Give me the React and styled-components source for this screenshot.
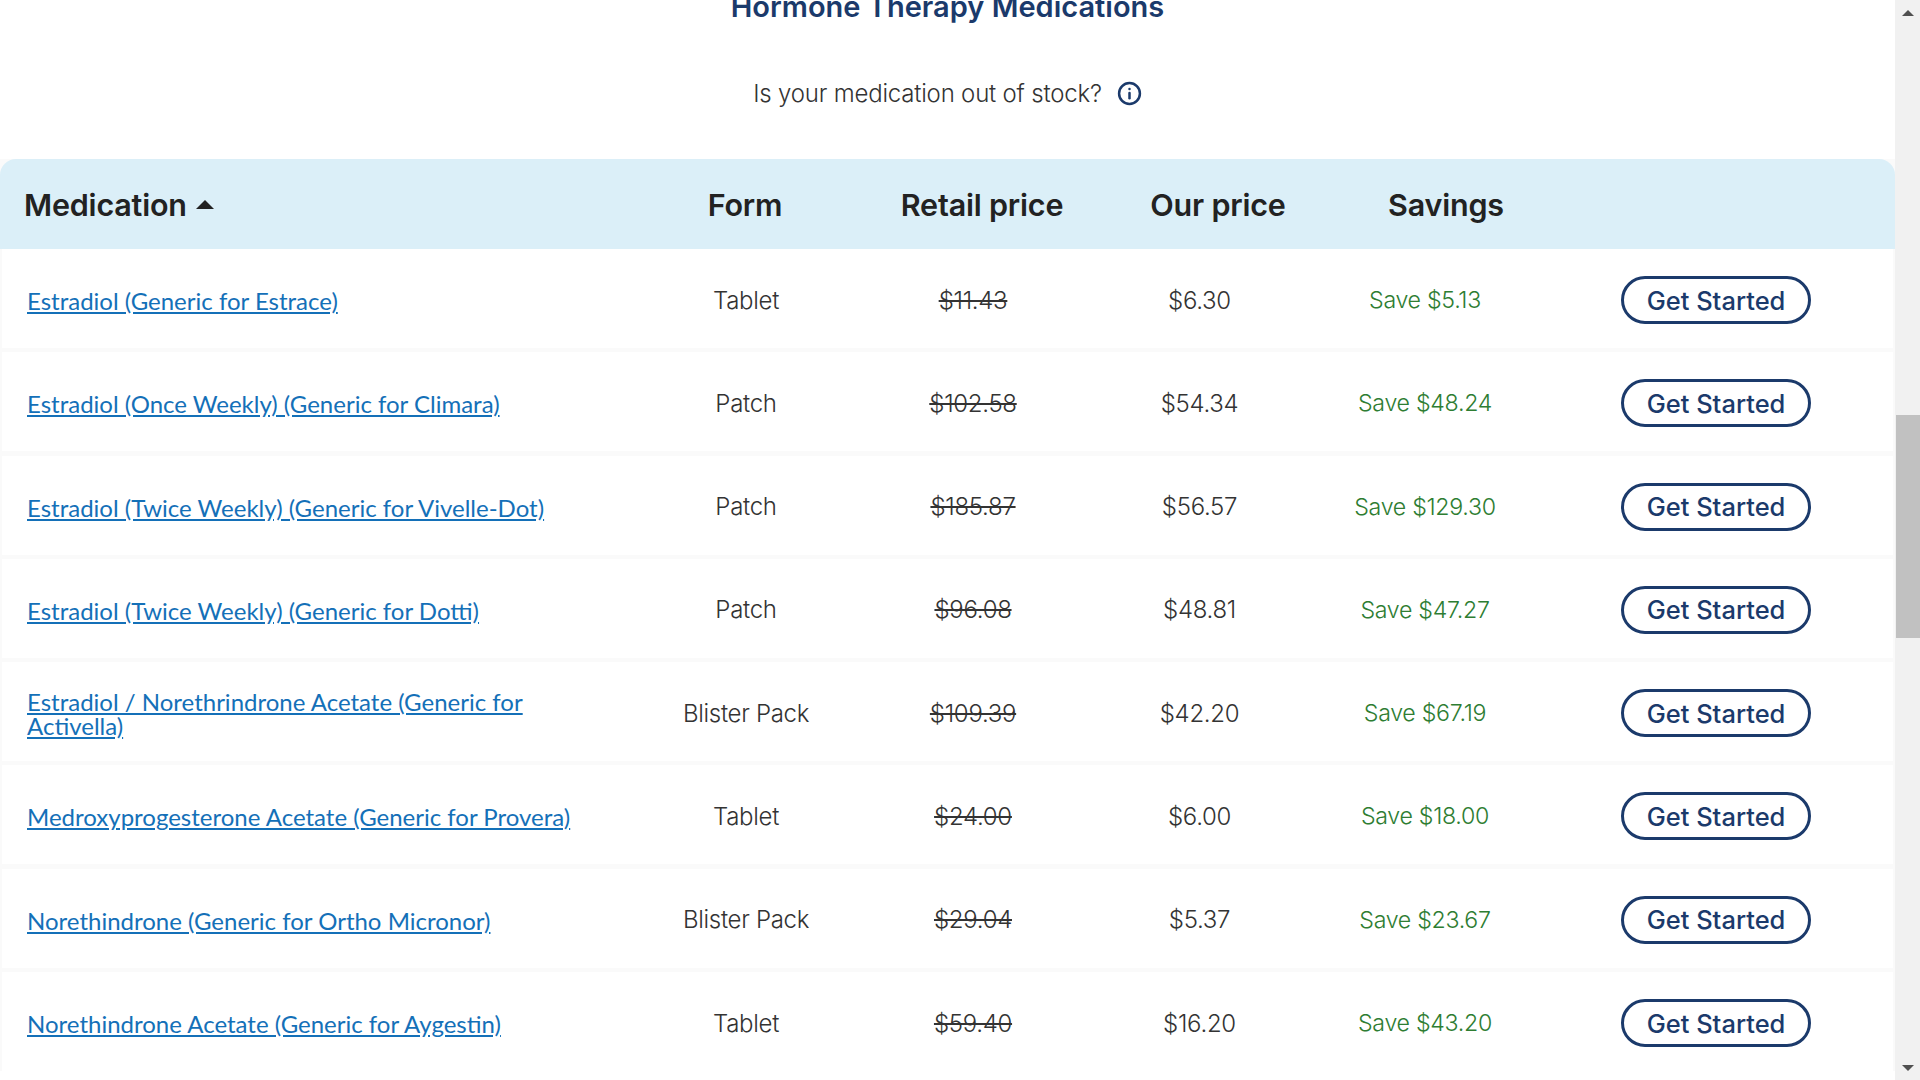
import React from "react";
import styled, { createGlobalStyle } from "styled-components";

const GlobalStyle = createGlobalStyle`
  html, body {
    margin: 0;
    padding: 0;
    height: 100%;
    overflow: hidden;
    background: #fff;
  }
  * { box-sizing: border-box; }
`;

const Viewport = styled.div`
  display: flex;
  width: 1920px;
  height: 1080px;
  overflow: hidden;
  font-family: Inter, "Open Sans", sans-serif;
  color: #2b2b2b;
`;

const Page = styled.main`
  flex: 1;
  min-width: 0;
  overflow: hidden;
`;

const Title = styled.h2`
  margin: -11px 0 0;
  font-size: 29px;
  line-height: 36px;
  font-weight: 600;
  text-align: center;
  color: #1b3a6b;
`;

const StockNote = styled.p`
  display: flex;
  align-items: center;
  justify-content: center;
  gap: 15px;
  margin: 52px 0 0;
  height: 32px;
  font-size: 24px;
  font-weight: 300;
  letter-spacing: -0.2px;
  color: #333;
`;

const InfoIcon = styled.svg`
  width: 25px;
  height: 25px;
  color: #1b3a6b;
`;

const Table = styled.section`
  margin-top: 50px;
  background: #fafafa;
`;

const HeaderRow = styled.div`
  display: grid;
  grid-template-columns: 631px 228px 246px 226px 230px 1fr;
  align-items: center;
  height: 90px;
  background: #dbeff8;
  border-radius: 16px 16px 0 0;
`;

const HeaderCell = styled.div`
  font-size: 30.5px;
  font-weight: 600;
  letter-spacing: -0.2px;
  color: #222;
  text-align: center;
`;

const SortCell = styled(HeaderCell)`
  display: flex;
  align-items: center;
  gap: 9px;
  padding-left: 24px;
  text-align: left;
`;

const SortArrow = styled.span`
  width: 0;
  height: 0;
  border-left: 9px solid transparent;
  border-right: 9px solid transparent;
  border-bottom: 9px solid #222;
`;

const Row = styled.div`
  display: grid;
  grid-template-columns: 630px 228px 226px 227px 224px 1fr;
  align-items: center;
  height: 99px;
  margin: 0 2px 4.3px;
  padding-top: 3px;
  background: #fff;
`;

const MedLink = styled.a`
  display: block;
  width: 560px;
  margin: 2px 0 0 25px;
  font-family: Lato, "Open Sans", sans-serif;
  font-size: 24px;
  line-height: 24px;
  color: #1470b8;
  text-decoration: underline;
`;

const Cell = styled.div`
  font-size: 24px;
  font-weight: 300;
  letter-spacing: -0.3px;
  text-align: center;
  color: #333;
  text-decoration: ${(props) => (props.$struck ? "line-through" : "none")};
  text-decoration-thickness: 2px;
`;

const SavingsCell = styled(Cell)`
  font-size: 23.2px;
  color: #2e7d32;
`;

const ButtonCell = styled.div`
  display: flex;
  justify-content: center;
  padding-left: 2px;
`;

const StartButton = styled.button`
  width: 190px;
  height: 48px;
  border: 3px solid #1b3a6b;
  border-radius: 24px;
  background: #fff;
  font-family: inherit;
  font-size: 25.5px;
  font-weight: 500;
  color: #1b3a6b;
  padding: 0;
`;

const Scrollbar = styled.aside`
  display: flex;
  flex-direction: column;
  justify-content: space-between;
  align-items: center;
  position: relative;
  width: 25px;
  padding: 10px 0 9px;
  background: #f1f1f1;
`;

const ScrollThumb = styled.div`
  position: absolute;
  top: 415px;
  left: 1px;
  right: 0;
  height: 223px;
  background: #c1c1c1;
`;

const ScrollArrow = styled.span`
  width: 0;
  height: 0;
  border-left: 6px solid transparent;
  border-right: 6px solid transparent;
  ${(props) => (props.$down ? "border-top: 6px solid #505050;" : "border-bottom: 6px solid #505050;")}
`;

const medications = [
  ["Estradiol (Generic for Estrace)", "Tablet", "$11.43", "$6.30", "Save $5.13"],
  ["Estradiol (Once Weekly) (Generic for Climara)", "Patch", "$102.58", "$54.34", "Save $48.24"],
  ["Estradiol (Twice Weekly) (Generic for Vivelle-Dot)", "Patch", "$185.87", "$56.57", "Save $129.30"],
  ["Estradiol (Twice Weekly) (Generic for Dotti)", "Patch", "$96.08", "$48.81", "Save $47.27"],
  ["Estradiol / Norethrindrone Acetate (Generic for Activella)", "Blister Pack", "$109.39", "$42.20", "Save $67.19"],
  ["Medroxyprogesterone Acetate (Generic for Provera)", "Tablet", "$24.00", "$6.00", "Save $18.00"],
  ["Norethindrone (Generic for Ortho Micronor)", "Blister Pack", "$29.04", "$5.37", "Save $23.67"],
  ["Norethindrone Acetate (Generic for Aygestin)", "Tablet", "$59.40", "$16.20", "Save $43.20"],
];

export default function App() {
  return (
    <Viewport>
      <GlobalStyle />
      <Page>
        <Title>Hormone Therapy Medications</Title>
        <StockNote>
          Is your medication out of stock?
          <InfoIcon viewBox="0 0 24 24" fill="none" stroke="currentColor" strokeWidth="2.4" strokeLinecap="round">
            <circle cx="12" cy="12" r="10" />
            <path d="M12 11.5v5" />
            <path d="M12 7.6v.1" />
          </InfoIcon>
        </StockNote>
        <Table>
          <HeaderRow>
            <SortCell>
              Medication
              <SortArrow />
            </SortCell>
            <HeaderCell>Form</HeaderCell>
            <HeaderCell>Retail price</HeaderCell>
            <HeaderCell>Our price</HeaderCell>
            <HeaderCell>Savings</HeaderCell>
          </HeaderRow>
          {medications.map(([name, form, retail, ours, savings]) => (
            <Row key={name}>
              <MedLink href="#">{name}</MedLink>
              <Cell>{form}</Cell>
              <Cell $struck>{retail}</Cell>
              <Cell>{ours}</Cell>
              <SavingsCell>{savings}</SavingsCell>
              <ButtonCell>
                <StartButton>Get Started</StartButton>
              </ButtonCell>
            </Row>
          ))}
        </Table>
      </Page>
      <Scrollbar>
        <ScrollArrow />
        <ScrollThumb />
        <ScrollArrow $down />
      </Scrollbar>
    </Viewport>
  );
}
